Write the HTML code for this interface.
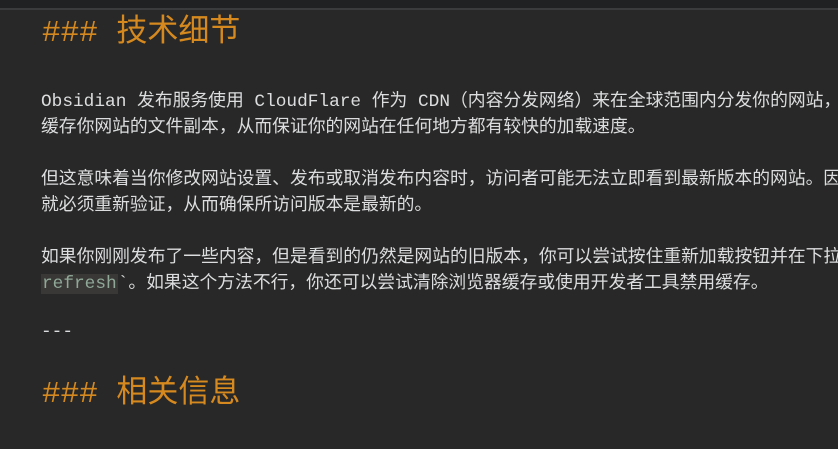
<html><head><style>
body{margin:0;width:838px;height:449px;overflow:hidden;background:#282828;font-family:"Liberation Mono","WenQuanYi Zen Hei",monospace;color:#dcddde;}
.wrap{position:absolute;left:0;top:0;width:838px;height:449px;overflow:hidden;}
.top{position:absolute;left:0;top:0;width:838px;height:8px;background:#1f2123;border-bottom:2px solid #3a3b3c;}
.l{position:absolute;left:41px;width:797px;overflow:hidden;white-space:nowrap;font-size:17.8px;line-height:26px;}
.h{position:absolute;left:42px;white-space:nowrap;font-size:31px;color:#d5891e;line-height:40px;}
code{background:#3a3836;color:#8fa898;font-family:inherit;padding:0 1px;}
</style></head><body><div class="wrap">
<div class="top"></div>
<div class="h" style="top:14px">### 技术细节</div>
<div class="l" style="top:89px">Obsidian 发布服务使用 CloudFlare 作为 CDN（内容分发网络）来在全球范围内分发你的网站，CloudFlare</div>
<div class="l" style="top:115px">缓存你网站的文件副本，从而保证你的网站在任何地方都有较快的加载速度。</div>
<div class="l" style="top:167px">但这意味着当你修改网站设置、发布或取消发布内容时，访问者可能无法立即看到最新版本的网站。因为</div>
<div class="l" style="top:193px">就必须重新验证，从而确保所访问版本是最新的。</div>
<div class="l" style="top:245px">如果你刚刚发布了一些内容，但是看到的仍然是网站的旧版本，你可以尝试按住重新加载按钮并在下拉菜单</div>
<div class="l" style="top:271px"><code>refresh</code>`。如果这个方法不行，你还可以尝试清除浏览器缓存或使用开发者工具禁用缓存。</div>
<div class="l" style="top:319px">---</div>
<div class="h" style="top:375px">### 相关信息</div>
</div></body></html>
